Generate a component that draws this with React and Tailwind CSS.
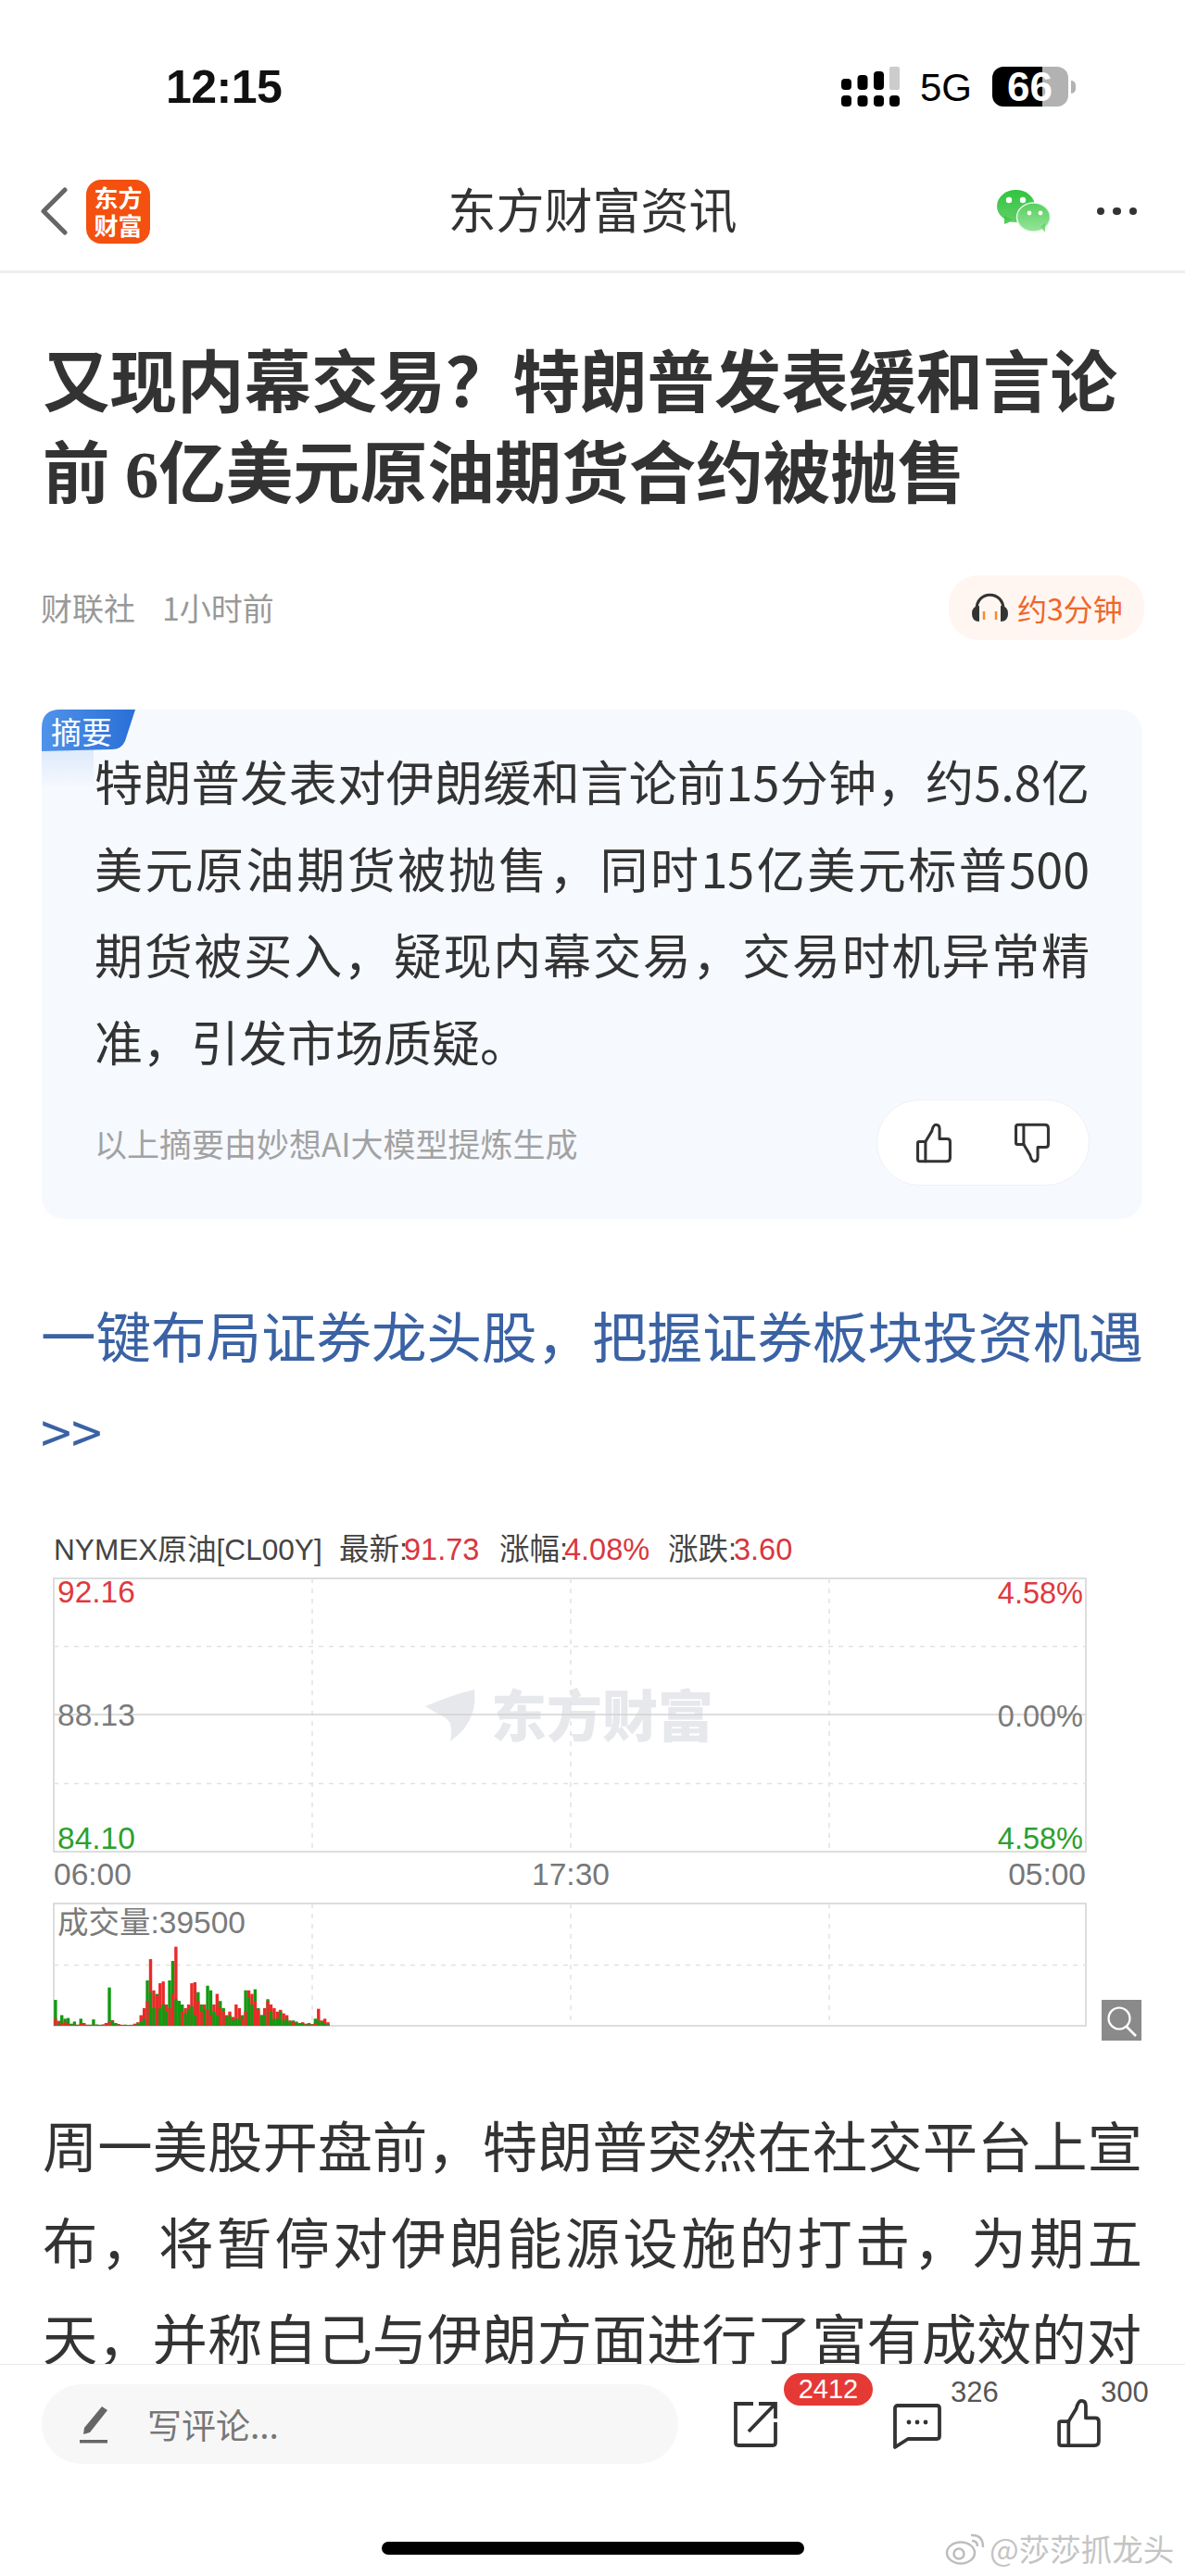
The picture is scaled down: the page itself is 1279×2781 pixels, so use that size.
import React from "react";

const CJK = "font-['Noto_Sans_CJK_SC','Noto_Sans',sans-serif]";
const LAT = "font-['Liberation_Sans','Noto_Sans_CJK_SC',sans-serif]";

const COMMA = "\uFF0C";
const QM = "\uFF1F";
const STOP = "\u3002";

const mx = (x) => 30 + x / 2.412;
const my = (y) => 1630 + y / 2.613;

const blue = [[70,515],[74,480],[78,458],[85,460],[92,480],[100,472],[108,487],[118,485],[124,495],[128,503],[140,505],[150,492],[160,497],[170,488],[185,492],[195,485],[208,476],[215,495],[222,510],[228,540],[235,525],[243,540],[250,520],[258,530],[268,505],[280,490],[290,460],[298,440],[305,410],[315,440],[325,400],[335,385],[345,395],[352,385],[360,380],[372,375],[380,325],[395,318],[405,340],[418,372],[428,300],[435,272],[445,300],[452,288],[460,280],[470,272],[480,265],[495,255],[510,228],[520,250],[532,245],[545,228],[555,240],[572,215],[582,230],[590,265],[605,275],[618,285],[630,298],[640,270],[648,275],[655,268],[670,258],[690,255],[708,262],[720,238],[735,240],[750,230],[765,243],[780,235]];
const yellow = [[70,482],[130,484],[210,486],[235,495],[290,495],[310,470],[350,445],[400,415],[450,393],[520,370],[590,350],[650,342],[720,338],[780,335]];
const line = (a) => a.map(([x, y], i) => `${i ? "L" : "M"}${mx(x).toFixed(1)} ${my(y).toFixed(1)}`).join(" ");

const reds = [20,14,8,10,6,6,3,3,6,5,3,3,3,2,2,4,6,12,16,8,5,3,3,2,3,6,10,30,50,70,188,100,85,120,125,60,50,90,223,70,40,50,60,120,123,70,40,60,45,30,60,90,50,40,30,40,25,60,50,20,40,100,90,70,45,30,50,70,60,50,40,45,35,30,15,10,12,8,10,6,8,5,8,48,15,20,10];
const greens = [73,8,30,20,22,5,12,3,20,8,3,3,18,4,3,3,8,108,14,6,3,2,3,2,2,2,5,12,20,128,95,50,90,50,60,40,128,183,75,70,60,35,45,55,30,95,60,45,113,100,40,30,70,50,25,30,15,20,20,30,100,80,60,103,50,30,30,75,40,20,20,40,15,20,12,15,10,6,8,4,4,4,20,15,12,8,4];

function Bars({ Y }) {
  return reds.map((r, i) => {
    const g = greens[i] || 0;
    const x = mx(68 + i * 8.25);
    const parts = [
      { h: r, c: "#ea2a2a" },
      { h: g, c: "#119a11" },
    ].sort((a, b) => b.h - a.h);
    return (
      <g key={i}>
        {parts.map((p, j) => (
          <rect key={j} x={x} y={Y(2188 - p.h / 2.613)} width="3.4" height={p.h / 2.613} fill={p.c} />
        ))}
      </g>
    );
  });
}

function Chart() {
  const off = 1650;
  const Y = (y) => y - off;
  const t = { fontFamily: "'Liberation Sans','Noto Sans CJK SC',sans-serif", fontSize: 33.5 };
  const grid = "#e2e2e2";
  return (
    <svg width="1279" height="560" viewBox="0 0 1279 560" className="block">
      <text x="58" y={Y(1685)} {...t} fontSize="31.6" fill="#444">NYMEX原油[CL00Y]</text>
      <text x="366" y={Y(1685)} {...t} fontSize="32.5" fill="#444">最新:</text>
      <text x="436" y={Y(1685)} {...t} fontSize="32.5" fill="#d9363e">91.73</text>
      <text x="539" y={Y(1685)} {...t} fontSize="32.5" fill="#444">涨幅:</text>
      <text x="609" y={Y(1685)} {...t} fontSize="32.5" fill="#d9363e">4.08%</text>
      <text x="721" y={Y(1685)} {...t} fontSize="32.5" fill="#444">涨跌:</text>
      <text x="792" y={Y(1685)} {...t} fontSize="32.5" fill="#d9363e">3.60</text>

      <text x="770" y={Y(1876)} textAnchor="end" fontFamily="'Noto Sans CJK SC',sans-serif" fontWeight="900" fontSize="60" fill="#e6e8ec">东方财富</text>
      <path d={`M459 ${Y(1843)} Q490 ${Y(1830)} 512 ${Y(1825)} Q516 ${Y(1860)} 486 ${Y(1881)} Q490 ${Y(1860)} 480 ${Y(1855)} Q470 ${Y(1850)} 459 ${Y(1843)}Z`} fill="#e6e8ec" />

      <rect x="58" y={Y(1705)} width="1114" height="295" fill="none" stroke="#d2d2d2" strokeWidth="1.5" />
      <path d={`M58 ${Y(1778.5)} H1172 M58 ${Y(1926.5)} H1172 M337 ${Y(1705)} V${Y(2000)} M616 ${Y(1705)} V${Y(2000)} M895 ${Y(1705)} V${Y(2000)}`} stroke={grid} strokeWidth="1.5" strokeDasharray="5 6" fill="none" />
      <path d={`M58 ${Y(1852)} H1172`} stroke="#d2d2d2" strokeWidth="1.5" />

      <path d={line(yellow)} stroke="#eeb23a" strokeWidth="1.6" fill="none" />
      <path d={line(blue)} stroke="#5a8fd8" strokeWidth="1.8" fill="none" strokeLinejoin="round" />

      <text x="62" y={Y(1731)} {...t} fill="#e0393e">92.16</text>
      <text x="62" y={Y(1864)} {...t} fill="#7b7b7b">88.13</text>
      <text x="62" y={Y(1997)} {...t} fill="#2ca02c">84.10</text>
      <text x="1169" y={Y(1732)} {...t} fontSize="32.5" textAnchor="end" fill="#e0393e">4.58%</text>
      <text x="1169" y={Y(1865)} {...t} fontSize="32.5" textAnchor="end" fill="#7b7b7b">0.00%</text>
      <text x="1169" y={Y(1997)} {...t} fontSize="32.5" textAnchor="end" fill="#2ca02c">4.58%</text>
      <text x="58" y={Y(2036)} {...t} fill="#777">06:00</text>
      <text x="616" y={Y(2036)} {...t} textAnchor="middle" fill="#777">17:30</text>
      <text x="1172" y={Y(2036)} {...t} textAnchor="end" fill="#777">05:00</text>

      <rect x="58" y={Y(2056)} width="1114" height="132" fill="none" stroke="#d2d2d2" strokeWidth="1.5" />
      <path d={`M58 ${Y(2122.5)} H1172 M337 ${Y(2056)} V${Y(2188)} M616 ${Y(2056)} V${Y(2188)} M895 ${Y(2056)} V${Y(2188)}`} stroke={grid} strokeWidth="1.5" strokeDasharray="5 6" fill="none" />
      <text x="62" y={Y(2088)} {...t} fill="#7b7b7b">成交量:39500</text>

      <Bars Y={Y} />

      <rect x="1189" y={Y(2160)} width="43" height="44" fill="#8a8a8a" />
      <circle cx="1208" cy={Y(2180)} r="11.5" fill="none" stroke="#fff" strokeWidth="2.2" />
      <path d={`M1216 ${Y(2189)} L1226 ${Y(2199)}`} stroke="#fff" strokeWidth="2.6" />
    </svg>
  );
}

const ThumbUp = ({ className }) => (
  <svg viewBox="0 0 50 58" className={className} fill="none" stroke="#333" strokeWidth="4" strokeLinejoin="round" strokeLinecap="round">
    <path d="M4 27 H13 V55 H5 Q2 55 2 52 V29 Q2 27 4 27Z" />
    <path d="M13 27 L22 12 Q24 3 28 3 Q33 3 33 9 V23 H44 Q48 23 48 27 V50 Q48 55 43 55 H13" />
  </svg>
);

export default function App() {
  return (
    <div className={`w-[1279px] h-[2781px] flex flex-col overflow-hidden bg-white ${CJK}`}>
      <div className="h-[2552px] shrink-0 overflow-hidden">
        {/* status bar */}
        <div className="h-[164px] flex items-start justify-between pl-[179px] pr-[118px] pt-[72px]">
          <div className={`${LAT} text-[50px] leading-[44px] font-bold text-[#111] tracking-[-0.5px]`}>12:15</div>
          <div className="flex items-start">
            <svg width="63" height="43" viewBox="0 0 63 43">
              <rect x="0" y="13" width="11" height="12" rx="4" fill="#000" />
              <rect x="17.5" y="9" width="11" height="16" rx="4" fill="#000" />
              <rect x="35" y="5" width="11" height="20" rx="4" fill="#000" />
              <rect x="52" y="0" width="11" height="25" rx="2" fill="#ccc" />
              <rect x="0" y="31" width="11" height="12" rx="4" fill="#000" />
              <rect x="17.5" y="31" width="11" height="12" rx="4" fill="#000" />
              <rect x="35" y="31" width="11" height="12" rx="4" fill="#000" />
              <rect x="52" y="31" width="11" height="12" rx="4" fill="#000" />
            </svg>
            <div className={`${LAT} ml-[22px] w-[56px] text-[42px] leading-[46px] text-black`}>5G</div>
            <div className="relative ml-[22px] w-[82px] h-[43px] flex">
              <div className="w-[54px] h-full bg-black rounded-l-[12px]" />
              <div className="w-[28px] h-full bg-[#b2b2b2] rounded-r-[12px]" />
              <span className={`${LAT} absolute left-[16px] top-0 text-[44px] leading-[43px] font-bold text-white`}>66</span>
            </div>
            <div className="ml-[3px] mt-[15px] w-[5px] h-[14px] rounded-r-full bg-[#b2b2b2]" />
          </div>
        </div>

        {/* nav */}
        <div className="h-[131px] grid grid-cols-[1fr_auto_1fr] items-center border-b-[3px] border-[#eeeeee]">
          <div className="flex items-center pl-[43px]">
            <svg width="30" height="52" viewBox="0 0 30 52" fill="none">
              <path d="M27 3 L4 26 L27 49" stroke="#666" strokeWidth="5" strokeLinecap="round" strokeLinejoin="round" />
            </svg>
            <div className="ml-[20px] w-[69px] h-[69px] rounded-[16px] bg-[#f4500f] flex flex-col items-center justify-center text-white text-[26px] leading-[30px] font-bold">
              <span>东方</span>
              <span>财富</span>
            </div>
          </div>
          <div className="text-[52px] leading-[60px] text-[#333] -translate-y-[3px]">东方财富资讯</div>
          <div className="flex items-center justify-end pr-[52px]">
            <svg width="58" height="46" viewBox="0 0 58 46">
              <defs>
                <linearGradient id="wa" x1="0" y1="0" x2="0" y2="1"><stop offset="0" stopColor="#2fc53f" /><stop offset="1" stopColor="#62cf68" /></linearGradient>
                <linearGradient id="wb" x1="0" y1="0" x2="0" y2="1"><stop offset="0" stopColor="#58ce5e" /><stop offset="1" stopColor="#95e59a" /></linearGradient>
              </defs>
              <ellipse cx="20.5" cy="17.5" rx="20.5" ry="17.5" fill="url(#wa)" />
              <path d="M8 28 L8 37 L18 33Z" fill="url(#wa)" />
              <circle cx="13" cy="11" r="3.2" fill="#fff" />
              <circle cx="28" cy="11" r="3.2" fill="#fff" />
              <ellipse cx="39.5" cy="29.5" rx="18" ry="15.5" fill="url(#wb)" stroke="#e8f8e8" strokeWidth="1.5" />
              <path d="M47 40 L52 46 L52 36Z" fill="url(#wb)" />
              <circle cx="35" cy="25" r="2.4" fill="#fff" />
              <circle cx="47" cy="25" r="2.4" fill="#fff" />
            </svg>
            <div className="ml-[50px] flex gap-[9px]">
              <span className="w-[8.5px] h-[8.5px] rounded-full bg-[#333]" />
              <span className="w-[8.5px] h-[8.5px] rounded-full bg-[#333]" />
              <span className="w-[8.5px] h-[8.5px] rounded-full bg-[#333]" />
            </div>
          </div>
        </div>

        {/* headline */}
        <h1 className="mt-[64px] px-[46px] text-[72.5px] leading-[98px] font-bold text-[#333] whitespace-nowrap">
          <div>{"又现内幕交易" + QM + "特朗普发表缓和言论"}</div>
          <div>前 <span className="font-['Liberation_Serif',serif]">6</span>亿美元原油期货合约被抛售</div>
        </h1>

        {/* meta */}
        <div className="mt-[58px] mx-[44px] flex items-center justify-between h-[72px]">
          <div className="text-[34px] leading-[44px] text-[#999] flex gap-[29px]">
            <span>财联社</span>
            <span>1小时前</span>
          </div>
          <div className="w-[211px] h-[70px] rounded-[32px] bg-[#fff6f1] flex items-center pl-[25px]">
            <svg width="39" height="32" viewBox="0 0 39 32" fill="none">
              <path d="M5 22 V18 C5 -3 34 -3 34 18 V22" stroke="#333" strokeWidth="3" />
              <path d="M8 14 V31 Q0 31 0 22.5 Q0 14 8 14Z" fill="#333" />
              <path d="M31 14 V31 Q39 31 39 22.5 Q39 14 31 14Z" fill="#333" />
              <path d="M13 20 V29 M26 20 V29" stroke="#f0902a" strokeWidth="2.5" />
            </svg>
            <span className="ml-[10px] text-[32px] leading-[40px] text-[#f0672a]">约3分钟</span>
          </div>
        </div>

        {/* summary */}
        <div className="relative mt-[74px] ml-[45px] mr-[46px] h-[550px] rounded-[24px] bg-[#f6f9fe] pl-[57px] pr-[57px] pt-[30px]">
          <div className="absolute left-0 top-[40px] w-[56px] h-[44px] bg-gradient-to-b from-[#dbe8fb] to-transparent" />
          <svg width="101" height="45" viewBox="0 0 101 45" className="absolute left-0 top-0">
            <defs>
              <linearGradient id="tg" x1="0" y1="0" x2="1" y2="0"><stop offset="0" stopColor="#4f93ea" /><stop offset="1" stopColor="#2a6fd6" /></linearGradient>
            </defs>
            <path d="M20 0 H101 L90 34 Q86 43 76 43 L0 45 V20 Q0 0 20 0Z" fill="url(#tg)" />
          </svg>
          <div className="absolute left-[10px] top-0 h-[45px] flex items-center text-[33px] leading-[40px] text-white">摘要</div>
          <p className="text-[52px] leading-[93.5px] text-[#333] text-justify">
            {"特朗普发表对伊朗缓和言论前15分钟" + COMMA + "约5.8亿美元原油期货被抛售" + COMMA + "同时15亿美元标普500期货被买入" + COMMA + "疑现内幕交易" + COMMA + "交易时机异常精准" + COMMA + "引发市场质疑" + STOP}
          </p>
          <div className="mt-[17px] flex items-center justify-between">
            <span className="text-[35px] leading-[44px] text-[#a2a2a2] whitespace-nowrap">以上摘要由妙想AI大模型提炼生成</span>
            <div className="w-[230px] h-[93px] rounded-full bg-white border border-[#eef1f6] flex items-center justify-between pl-[39px] pr-[39px]">
              <ThumbUp className="w-[44px] h-[44px]" />
              <ThumbUp className="w-[44px] h-[44px] rotate-180 -scale-x-100" />
            </div>
          </div>
        </div>

        {/* link */}
        <div className="mt-[72px] ml-[44px] mr-[44px] text-[59.5px] leading-[104px] text-[#3a62a4]">
          <div className="whitespace-nowrap">{"一键布局证券龙头股" + COMMA + "把握证券板块投资机遇"}</div>
          <div>&gt;&gt;</div>
        </div>

        {/* chart */}
        <div className="mt-[53px]">
          <Chart />
        </div>

        {/* article */}
        <p className="mt-[53px] mx-[46px] text-[59.3px] leading-[104px] text-[#333] text-justify">
          {"周一美股开盘前" + COMMA + "特朗普突然在社交平台上宣布" + COMMA + "将暂停对伊朗能源设施的打击" + COMMA + "为期五天" + COMMA + "并称自己与伊朗方面进行了富有成效的对"}
        </p>
      </div>

      {/* bottom bar */}
      <div className="relative h-[229px] shrink-0 bg-white border-t border-[#e8e8e8]">
        <div className="absolute left-[45px] top-[21px] w-[687px] h-[86px] rounded-full bg-[#f7f7f7] flex items-center pl-[41px]">
          <svg width="30" height="41" viewBox="0 0 30 41">
            <path d="M24 1 L30 5 L11 29 L4 31 L5 24Z" fill="#666" />
            <rect x="0" y="37" width="30" height="3.5" fill="#666" />
          </svg>
          <span className="ml-[43px] text-[37px] leading-[44px] text-[#777]">写评论...</span>
        </div>

        <svg width="49" height="51" viewBox="0 0 49 51" fill="none" stroke="#333" strokeWidth="3.8" className="absolute left-[791px] top-[39px]">
          <path d="M22 3 H3 V45 Q3 48 6 48 H43 Q46 48 46 45 V23" />
          <path d="M17 33 L44 5 M28 3 H46 V19" />
        </svg>
        <div className={`${LAT} absolute left-[846px] top-[9px] w-[96px] h-[35px] rounded-full bg-[#e53935] flex items-center justify-center text-[29px] leading-[35px] text-white`}>2412</div>

        <svg width="52" height="50" viewBox="0 0 52 50" fill="none" className="absolute left-[964px] top-[42px]">
          <path d="M5 2 H47 Q50 2 50 5 V35 Q50 38 47 38 H16 L2 47 V5 Q2 2 5 2Z" stroke="#333" strokeWidth="3.8" strokeLinejoin="round" />
          <circle cx="17" cy="20" r="2.4" fill="#333" /><circle cx="26" cy="20" r="2.4" fill="#333" /><circle cx="35" cy="20" r="2.4" fill="#333" />
        </svg>
        <span className={`${LAT} absolute left-[1026px] top-[12px] text-[31px] leading-[36px] text-[#555]`}>326</span>

        <ThumbUp className="absolute left-[1138px] top-[36px] w-[53px] h-[54px]" />
        <span className={`${LAT} absolute left-[1188px] top-[12px] text-[31px] leading-[36px] text-[#555]`}>300</span>

        <div className="absolute left-[412px] top-[191px] w-[456px] h-[14px] rounded-full bg-black" />

        <svg width="46" height="38" viewBox="0 0 46 38" fill="none" stroke="#bdbdbd" strokeWidth="2.5" className="absolute left-[1020px] top-[178px]">
          <ellipse cx="17" cy="25" rx="15" ry="11.5" />
          <circle cx="15" cy="26" r="5.5" />
          <path d="M28 6 Q41 5 41 19 M29 12 Q35 12 35 18" />
        </svg>
        <span className="absolute left-[1068px] top-[176px] text-[33.5px] leading-[44px] text-[#c4c4c4] whitespace-nowrap">@莎莎抓龙头</span>
      </div>
    </div>
  );
}
